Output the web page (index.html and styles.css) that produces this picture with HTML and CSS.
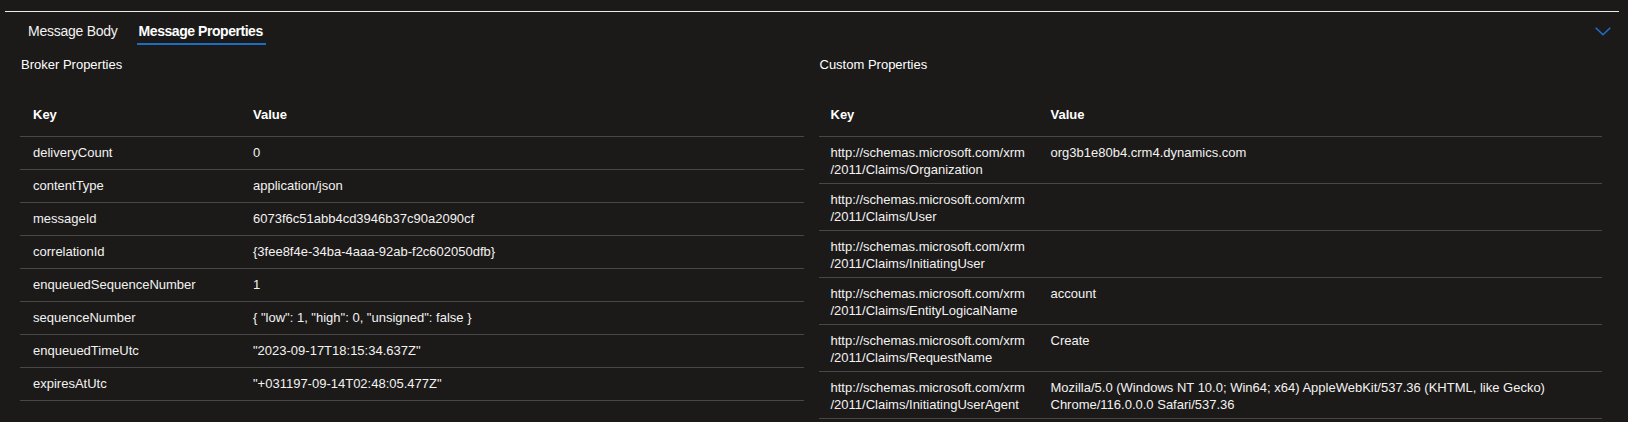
FILE: index.html
```html
<!DOCTYPE html>
<html lang="en">
<head>
<meta charset="utf-8">
<title>Message Properties</title>
<link rel="stylesheet" href="styles.css">
</head>
<body>
<div class="panel">
  <div class="tabbar">
    <div class="tabs">
      <div class="tab">Message Body</div>
      <div class="tab active">Message Properties</div>
    </div>
    <svg class="chevron" width="16" height="9" viewBox="0 0 16 9" aria-hidden="true">
      <polyline points="0.7,0.7 8,7.8 15.3,0.7" fill="none" stroke="currentColor" stroke-width="1.5"/>
    </svg>
  </div>
  <div class="content">
    <section class="col">
      <h3 class="title">Broker Properties</h3>
      <table class="props broker">
        <colgroup><col class="kcol"><col></colgroup>
        <thead><tr><th>Key</th><th>Value</th></tr></thead>
        <tbody>
          <tr><td>deliveryCount</td><td>0</td></tr>
          <tr><td>contentType</td><td>application/json</td></tr>
          <tr><td>messageId</td><td>6073f6c51abb4cd3946b37c90a2090cf</td></tr>
          <tr><td>correlationId</td><td>{3fee8f4e-34ba-4aaa-92ab-f2c602050dfb}</td></tr>
          <tr><td>enqueuedSequenceNumber</td><td>1</td></tr>
          <tr><td>sequenceNumber</td><td>{ "low": 1, "high": 0, "unsigned": false }</td></tr>
          <tr><td>enqueuedTimeUtc</td><td>"2023-09-17T18:15:34.637Z"</td></tr>
          <tr><td>expiresAtUtc</td><td>"+031197-09-14T02:48:05.477Z"</td></tr>
        </tbody>
      </table>
    </section>
    <section class="col">
      <h3 class="title">Custom Properties</h3>
      <table class="props custom">
        <colgroup><col class="kcol"><col></colgroup>
        <thead><tr><th>Key</th><th>Value</th></tr></thead>
        <tbody>
          <tr><td>http://schemas.microsoft.com/xrm<br>/2011/Claims/Organization</td><td>org3b1e80b4.crm4.dynamics.com</td></tr>
          <tr><td>http://schemas.microsoft.com/xrm<br>/2011/Claims/User</td><td></td></tr>
          <tr><td>http://schemas.microsoft.com/xrm<br>/2011/Claims/InitiatingUser</td><td></td></tr>
          <tr><td>http://schemas.microsoft.com/xrm<br>/2011/Claims/EntityLogicalName</td><td>account</td></tr>
          <tr><td>http://schemas.microsoft.com/xrm<br>/2011/Claims/RequestName</td><td>Create</td></tr>
          <tr><td>http://schemas.microsoft.com/xrm<br>/2011/Claims/InitiatingUserAgent</td><td>Mozilla/5.0 (Windows NT 10.0; Win64; x64) AppleWebKit/537.36 (KHTML, like Gecko)<br>Chrome/116.0.0.0 Safari/537.36</td></tr>
        </tbody>
      </table>
    </section>
  </div>
</div>
</body>
</html>
```
FILE: styles.css
```css
html, body {
  margin: 0;
  padding: 0;
  background: #1b1a19;
}
body {
  font-family: "Liberation Sans", Arial, sans-serif;
  color: #f3f2f1;
  height: 422px;
  overflow: hidden;
}
.panel {
  margin: 11px 9px 0 5px;
  border-top: 1px solid #ececec;
}
.tabbar {
  display: flex;
  justify-content: space-between;
  align-items: flex-start;
}
.tabs {
  display: flex;
  gap: 21px;
  padding-left: 23px;
}
.tab {
  position: relative;
  font-size: 14px;
  line-height: 20px;
  padding: 9px 0 4px;
  color: #f3f2f1;
  white-space: nowrap;
  letter-spacing: -0.25px;
}
.tab.active {
  font-weight: 700;
  color: #ffffff;
  letter-spacing: -0.45px;
}
.tab.active::after {
  content: "";
  position: absolute;
  left: -2px;
  right: -3px;
  bottom: 0;
  height: 2px;
  background: #1b6ec2;
}
.chevron {
  display: block;
  color: #1f6fd0;
  margin: 15px 8px 0 0;
}
.content {
  display: grid;
  grid-template-columns: 1fr 1fr;
  column-gap: 15px;
  padding: 11px 17px 0 15px;
}
.title {
  margin: 0 0 21px 1px;
  font-size: 13px;
  line-height: 17px;
  font-weight: 400;
  color: #ffffff;
}
.props {
  width: 100%;
  table-layout: fixed;
  border-collapse: separate;
  border-spacing: 0;
  font-size: 13px;
  line-height: 17px;
}
.props .kcol {
  width: 220px;
}
.props th {
  text-align: left;
  font-weight: 700;
  color: #ffffff;
  padding: 12px 12px 13px 13px;
  border-bottom: 1px solid #474747;
}
.props td {
  border-bottom: 1px solid #474747;
  color: #f3f2f1;
  white-space: nowrap;
  overflow: hidden;
}
.broker td {
  padding: 7px 12px 8px 13px;
  vertical-align: middle;
}
.custom td {
  padding: 7px 12px 5px 12px;
  vertical-align: top;
}
.custom th {
  padding-left: 12px;
}
```
